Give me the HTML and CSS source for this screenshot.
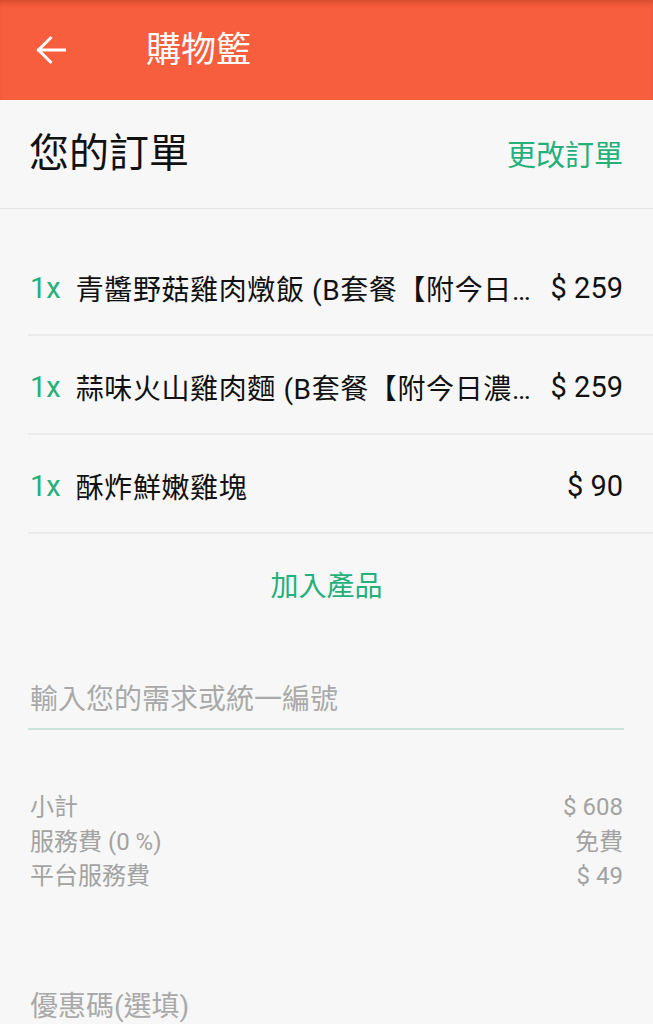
FILE: index.html
```html
<!DOCTYPE html>
<html lang="zh-Hant">
<head>
<meta charset="utf-8">
<title>購物籃</title>
<link rel="stylesheet" href="styles.css">
</head>
<body>
<header class="appbar">
  <svg class="back" viewBox="0 0 30 30" width="30" height="30" aria-hidden="true">
    <path d="M28.5 15H2.5M14.5 3L2.5 15l12 12" fill="none" stroke="#fff" stroke-width="3" stroke-linecap="square"/>
  </svg>
  <h1 class="appbar-title">購物籃</h1>
</header>

<section class="order-head">
  <h2 class="order-title">您的訂單</h2>
  <a class="link">更改訂單</a>
</section>

<ul class="items">
  <li class="item">
    <span class="qty">1x</span>
    <span class="name">青醬野菇雞肉燉飯 (B套餐【附今日濃湯】)</span>
    <span class="price">$ 259</span>
  </li>
  <li class="item">
    <span class="qty">1x</span>
    <span class="name">蒜味火山雞肉麵 (B套餐【附今日濃湯】)</span>
    <span class="price">$ 259</span>
  </li>
  <li class="item">
    <span class="qty">1x</span>
    <span class="name">酥炸鮮嫩雞塊</span>
    <span class="price">$ 90</span>
  </li>
</ul>

<div class="add">加入產品</div>

<div class="note">
  <div class="placeholder">輸入您的需求或統一編號</div>
</div>

<div class="summary">
  <div class="sum-row"><span>小計</span><span>$ 608</span></div>
  <div class="sum-row"><span>服務費 (0 %)</span><span>免費</span></div>
  <div class="sum-row"><span>平台服務費</span><span>$ 49</span></div>
</div>

<div class="coupon">優惠碼(選填)</div>
</body>
</html>
```

FILE: styles.css
```css
* { box-sizing: border-box; }
html, body { margin: 0; padding: 0; }
body {
  background: #f7f7f7;
  font-family: Roboto, "Noto Sans CJK TC", sans-serif;
  color: #111;
  width: 653px;
  overflow: hidden;
}
.appbar {
  height: 100px;
  background: #f75e3e;
  display: flex;
  align-items: center;
  padding-left: 36px;
  box-shadow: inset 0 6px 6px -4px rgba(120, 30, 10, 0.35);
}
.back { display: block; flex: none; }
.appbar-title {
  margin: 0 0 0 80px;
  font-size: 35px;
  font-weight: 400;
  color: #fff;
  line-height: 1;
}
.order-head {
  height: 109px;
  padding: 0 30px 0 29px;
  display: flex;
  align-items: center;
  justify-content: space-between;
  border-bottom: 1px solid #e5e5e5;
}
.order-title {
  margin: 0;
  font-size: 40px;
  font-weight: 400;
  line-height: 1;
}
.link {
  color: #23b07b;
  font-size: 29px;
  line-height: 1;
  padding-top: 4px;
}
.items {
  list-style: none;
  margin: 0 0 0 28px;
  padding: 28px 0 0 0;
}
.item {
  height: 99px;
  display: flex;
  align-items: center;
  padding: 4px 30px 0 2px;
  border-bottom: 2px solid #ebebeb;
  font-size: 28px;
}
.qty { color: #23b07b; flex: none; font-size: 29px; margin-right: 15px; }
.name {
  flex: 1;
  min-width: 0;
  white-space: nowrap;
  overflow: hidden;
  text-overflow: ellipsis;
  letter-spacing: 0.6px;
  margin-right: 12px;
}
.price { flex: none; font-size: 29px; }
.add {
  height: 100px;
  display: flex;
  align-items: center;
  justify-content: center;
  color: #23b07b;
  font-size: 28px;
}
.note {
  margin: 0 29px 0 28px;
  padding-top: 46px;
  padding-bottom: 8px;
  border-bottom: 2px solid #cae4dd;
}
.placeholder {
  color: #a9a9a9;
  font-size: 28px;
  line-height: 40px;
  padding-left: 2px;
}
.summary {
  margin-top: 60px;
  padding: 0 30px 0 30px;
  color: #a3a3a3;
  font-size: 24px;
}
.sum-row {
  display: flex;
  justify-content: space-between;
  line-height: 34.5px;
}
.coupon {
  margin-top: 93px;
  padding-left: 30px;
  color: #a9a9a9;
  font-size: 28px;
  line-height: 40px;
}
```
